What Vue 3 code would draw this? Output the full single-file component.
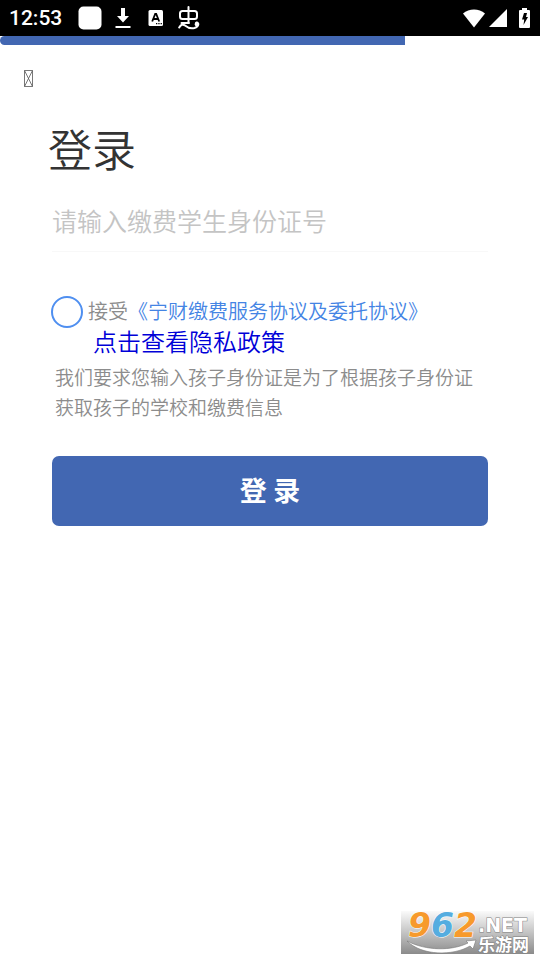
<script setup>
import { ref } from 'vue'

const idNumber = ref('')
const accepted = ref(false)
const progress = 75
</script>

<template>
  <div class="screen">
    <header class="status">
      <div class="status-group left">
        <span class="clock">12:53</span>
        <svg class="i-square" width="24" height="24" viewBox="0 0 24 24" aria-hidden="true">
          <rect x="0.5" y="0.5" width="23" height="23" rx="5" fill="#fff" />
        </svg>
        <svg class="i-download" width="16" height="22" viewBox="0 0 16 22" aria-hidden="true">
          <path d="M6 1h4v8h4l-6 6.500-6-6.500h4zM.5 19h15v2H.5z" fill="#fff" />
        </svg>
        <svg class="i-card" width="16" height="18" viewBox="0 0 16 18" aria-hidden="true">
          <rect x="0.500" y="1" width="14.500" height="16" rx="1.500" fill="#fff" />
          <path d="M4.200 12.500 7.200 5h1l3 7.500M5.400 10h4.500" fill="none" stroke="#000" stroke-width="1.800" />
          <path d="M8 14h1.300v1.300H8zM10.300 14h1.300v1.300h-1.300zM12.600 14h1.300v1.300h-1.300z" fill="#000" />
        </svg>
        <svg class="i-bug" width="22" height="24" viewBox="0 0 22 24" aria-hidden="true">
          <path
            d="M10.500 1v16M4.500 5h12q2.500 0 2.500 2.500v3q0 2.500-2.500 2.500h-12Q2 13 2 10.500v-3Q2 5 4.500 5zM3.500 17h7.500M1.200 21.500C3 18.500 5 18 7 19.500c3 2.500 6 3.500 9.500 2.500 3-1 4.500-3 3.500-4.800-.8-1.200-2.300-.7-2.200.5"
            fill="none" stroke="#fff" stroke-width="2" stroke-linecap="round" stroke-linejoin="round" />
          <circle cx="18.500" cy="18.500" r="1.800" fill="#fff" />
        </svg>
      </div>
      <div class="status-group right">
        <svg width="22" height="19" viewBox="0 0 22 19" aria-hidden="true">
          <path d="M0 4.500C6-1 16-1 22 4.500L11 18.500z" fill="#fff" />
        </svg>
        <svg class="i-signal" width="18" height="18" viewBox="0 0 18 18" aria-hidden="true">
          <path d="M18 0v18H0z" fill="#fff" />
        </svg>
        <svg class="i-battery" width="11" height="20" viewBox="0 0 11 20" aria-hidden="true">
          <path d="M3 0h5v2h2q1 0 1 1v16q0 1-1 1H1q-1 0-1-1V3q0-1 1-1h2z" fill="#fff" />
          <path d="M5 5h3L7 9h2l-4.500 8 .7-5.500H3z" fill="#000" />
        </svg>
      </div>
    </header>

    <div class="track" role="progressbar" :aria-valuenow="progress" aria-valuemin="0" aria-valuemax="100">
      <div class="bar" :style="{ width: progress + '%' }"></div>
    </div>

    <nav class="nav">
      <button class="back" type="button" aria-label="返回">
        <svg width="10" height="18" viewBox="0 0 10 18" aria-hidden="true">
          <path d="M.5.5h8v16h-8zl8 16M8.500.5l-8 16" fill="none" stroke="#555" stroke-width="0.800" />
        </svg>
      </button>
    </nav>

    <main class="content">
      <h1 class="title">登录</h1>
      <form @submit.prevent>
        <input v-model="idNumber" class="field" type="text" aria-label="请输入缴费学生身份证号" placeholder="请输入缴费学生身份证号" />
        <div class="agreement">
          <input id="accept" v-model="accepted" class="check" type="checkbox" />
          <p class="terms"><label for="accept">接受</label><a class="terms-link" href="#terms">《宁财缴费服务协议及委托协议》</a></p>
        </div>
        <a class="privacy" href="#privacy">点击查看隐私政策</a>
        <p class="note">我们要求您输入孩子身份证是为了根据孩子身份证获取孩子的学校和缴费信息</p>
        <button class="submit" type="submit">登 录</button>
      </form>
    </main>

    <div class="mark">
      <svg class="swoosh" width="133" height="43" viewBox="0 0 133 43" aria-hidden="true">
        <path d="M6 30c15 15 46 15 63 5l3 3 3-9-10 1 2 2c-16 8-42 8-61-2z" fill="#fff" stroke="#777" stroke-width="0.600" />
      </svg>
      <div class="digits"><span class="orange">9</span><span class="blue">6</span><span class="orange">2</span></div>
      <div class="site">
        <span class="net">.NET</span>
        <span class="cn">乐游网</span>
      </div>
    </div>
  </div>
</template>

<style>
body {
  background: #fff;
}
</style>

<style scoped>
.screen {
  position: relative;
  min-height: 100vh;
  font-family: Roboto, "Noto Sans CJK SC", sans-serif;
  font-weight: 350;
  color: #333;
}
.status {
  display: flex;
  justify-content: space-between;
  align-items: center;
  height: 36px;
  padding: 0 10px 0 9px;
  background: #000;
}
.status-group {
  display: flex;
  align-items: center;
}
.clock {
  color: #fff;
  font-size: 21px;
  font-weight: 500;
  line-height: 36px;
}
.i-square {
  margin-left: 16px;
}
.i-download {
  margin-left: 13px;
}
.i-card {
  margin-left: 17px;
}
.i-bug {
  margin-left: 14px;
}
.i-signal {
  margin-left: 4px;
}
.i-battery {
  margin-left: 12px;
}
.bar {
  height: 9px;
  background: #4267b2;
  border-radius: 5px 0 0 5px;
}
.nav {
  padding: 25px 24px 0;
}
.back {
  display: block;
  padding: 0;
  border: 0;
  background: none;
}
.back svg {
  display: block;
}
.content {
  padding: 32px 52px;
}
.title {
  margin: 0 -4px;
  font-size: 44px;
  font-weight: inherit;
  line-height: 64px;
}
.field {
  display: block;
  box-sizing: border-box;
  width: 100%;
  height: 60px;
  margin-top: 8px;
  padding: 2px 0 0;
  border: 0;
  border-bottom: 1px solid #f8f8f8;
  outline: 0;
  background: none;
  font-family: inherit;
  font-size: 25px;
  font-weight: inherit;
  color: #333;
}
.field::placeholder {
  color: #c4c4c4;
  opacity: 1;
}
.agreement {
  display: flex;
  gap: 5px;
  margin: 44px -1px 0;
}
.check {
  appearance: none;
  flex: none;
  box-sizing: border-box;
  width: 32px;
  height: 32px;
  margin: 0;
  border: 2px solid #4f8ff0;
  border-radius: 50%;
}
.check:checked {
  background: #4f8ff0;
}
.terms {
  margin: 0;
  font-size: 20px;
  line-height: 32px;
  color: #8c8c8c;
}
.terms-link {
  color: #4484e4;
  text-decoration: none;
}
.privacy {
  display: block;
  padding-left: 41px;
  font-size: 24px;
  line-height: 30px;
  color: #0000d8;
  text-decoration: none;
}
.note {
  margin: 6px 0 0;
  padding: 0 12px 0 3px;
  font-size: 19px;
  line-height: 30px;
  color: #8c8c8c;
}
.submit {
  display: block;
  width: 100%;
  height: 70px;
  margin-top: 32px;
  padding: 0 0 4px;
  border: 0;
  border-radius: 7px;
  background: #4267b2;
  color: #fff;
  font-family: inherit;
  font-size: 27px;
  font-weight: 700;
}
.mark {
  position: absolute;
  right: 6px;
  bottom: 6px;
  display: flex;
  box-sizing: border-box;
  width: 133px;
  height: 43px;
  padding-left: 7px;
  background: linear-gradient(#fafafa, #c4c4c4 50%, #8b8b8b);
  font-weight: 700;
}
.swoosh {
  position: absolute;
  left: 0;
  top: 0;
}
.digits {
  position: relative;
  width: 70px;
  font-family: "DejaVu Sans", sans-serif;
  font-size: 33px;
  font-style: italic;
  line-height: 30px;
  -webkit-text-stroke: 1px #fff;
  paint-order: stroke;
}
.orange {
  color: #f79a2c;
}
.blue {
  color: #55ade0;
}
.site {
  position: relative;
  display: flex;
  flex-direction: column;
  padding-top: 4px;
  color: #fff;
  -webkit-text-stroke: 1px #808080;
  paint-order: stroke;
}
.net {
  font-family: "DejaVu Sans", sans-serif;
  font-size: 19px;
  line-height: 20px;
}
.cn {
  font-family: "Noto Sans CJK SC", sans-serif;
  font-size: 17px;
  line-height: 18px;
}
</style>
